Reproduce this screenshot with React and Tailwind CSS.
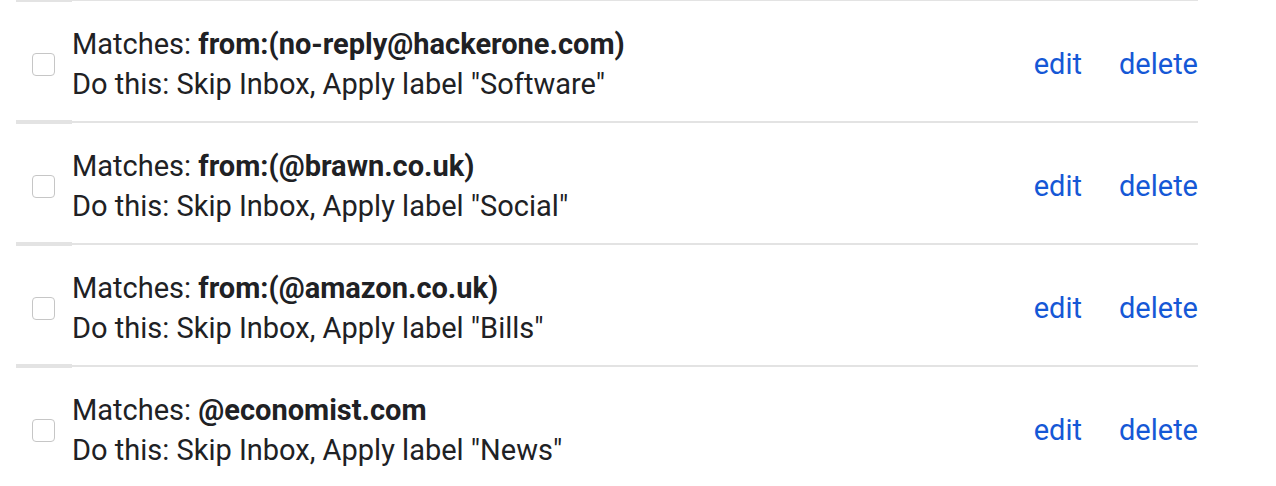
import React from 'react';

const filters = [
  { match: 'from:(no-reply@hackerone.com)', label: 'Software' },
  { match: 'from:(@brawn.co.uk)', label: 'Social' },
  { match: 'from:(@amazon.co.uk)', label: 'Bills' },
  { match: '@economist.com', label: 'News' },
];

function FilterRow({ match, label }) {
  return (
    <div className="flex h-[122px]">
      <div className="w-[56px] border-t-4 border-[#e3e3e3] flex items-center pl-4 pt-[6px]">
        <div className="w-[23px] h-[23px] rounded-[4px] border border-[#c6c6c6] bg-white" />
      </div>
      <div className="flex-1 mt-[1px] border-t-2 border-[#e3e3e3] flex items-center pt-[6px]">
        <div className="flex-1 text-[29px] leading-[40px] text-[#202124]">
          <div>
            Matches: <span className="font-bold">{match}</span>
          </div>
          <div>Do this: Skip Inbox, Apply label "{label}"</div>
        </div>
        <div className="flex items-center gap-[37px] text-[29px] leading-[40px] text-[#1558d6]">
          <span>edit</span>
          <span>delete</span>
        </div>
      </div>
    </div>
  );
}

export default function App() {
  return (
    <div className="bg-white min-h-screen overflow-hidden" style={{ fontFamily: 'Roboto, "Liberation Sans", sans-serif' }}>
      <div className="ml-4 w-[1182px] -mt-[2px]">
        {filters.map((f) => (
          <FilterRow key={f.match} {...f} />
        ))}
      </div>
    </div>
  );
}
